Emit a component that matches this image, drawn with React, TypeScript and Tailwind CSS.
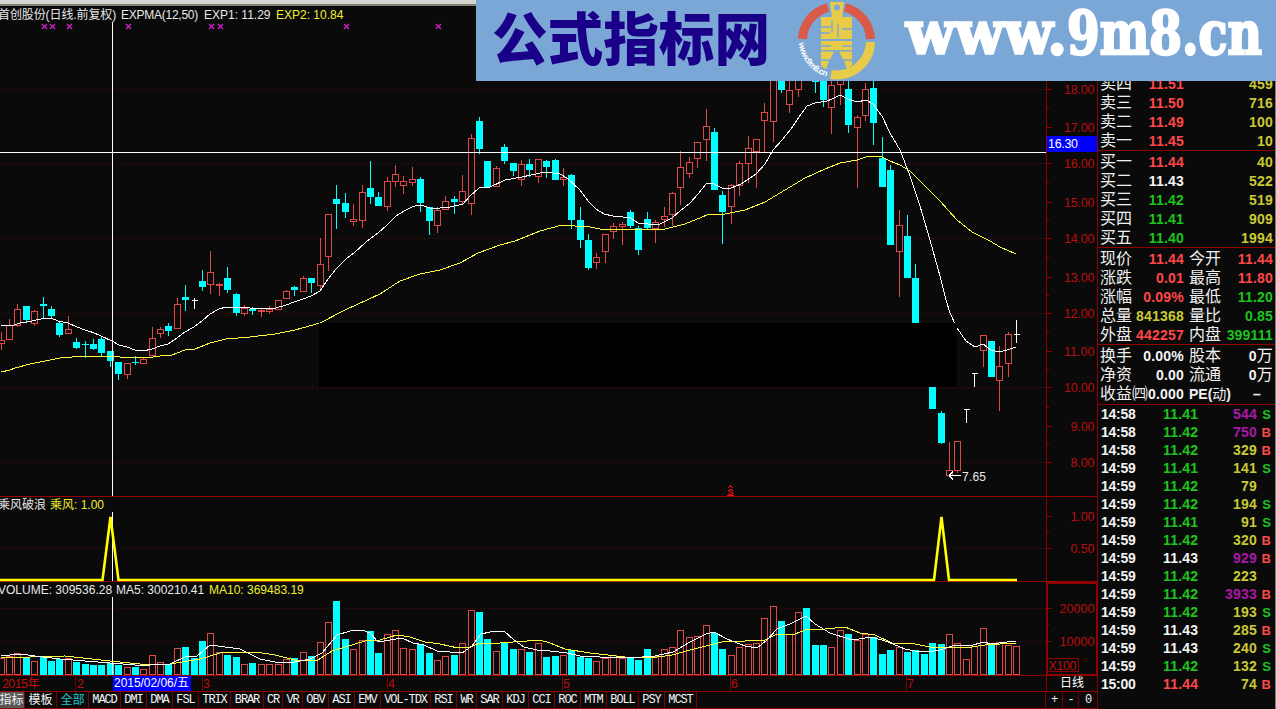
import clsx from 'clsx';

type Kind = 'r' | 'c' | 'x' | 't';
// kind, high, body top, body bottom, low, volume top
type Bar = [Kind, number, number, number, number, number];

const BARS: Bar[] = [
  ['r', 332, 340, 343, 349, 658], ['r', 319, 325, 339, 339, 656], ['r', 304, 309, 325, 326, 653], ['c', 306, 306, 320, 323, 657],
  ['r', 310, 311, 323, 325, 661], ['c', 297, 304, 306, 318, 656], ['c', 306, 309, 316, 319, 661], ['c', 321, 323, 335, 337, 659],
  ['r', 316, 329, 333, 333, 658], ['c', 338, 342, 348, 349, 662], ['c', 341, 344, 345, 358, 664], ['c', 339, 344, 349, 350, 665],
  ['c', 337, 339, 353, 356, 665], ['c', 351, 351, 361, 367, 663], ['c', 362, 362, 374, 380, 665], ['r', 363, 363, 374, 378, 667],
  ['c', 356, 362, 363, 365, 667], ['r', 357, 359, 363, 363, 669], ['r', 327, 338, 355, 355, 655], ['r', 327, 329, 333, 337, 662],
  ['c', 323, 326, 331, 336, 664], ['r', 298, 304, 328, 328, 648], ['c', 285, 297, 300, 311, 647], ['x', 298, 300, 300, 309, 658],
  ['c', 270, 281, 287, 291, 641], ['r', 251, 272, 284, 293, 633], ['r', 283, 284, 285, 295, 652], ['c', 267, 278, 290, 293, 655],
  ['c', 293, 294, 313, 316, 657], ['r', 305, 308, 313, 315, 664], ['c', 307, 309, 311, 315, 663], ['r', 309, 310, 311, 316, 664],
  ['r', 306, 309, 311, 313, 664], ['r', 300, 300, 309, 309, 664], ['r', 290, 291, 298, 298, 659], ['c', 286, 287, 290, 296, 658],
  ['r', 276, 278, 291, 291, 652], ['c', 278, 278, 283, 293, 656], ['r', 238, 264, 285, 288, 642], ['r', 214, 214, 256, 270, 622],
  ['c', 185, 199, 204, 229, 601], ['c', 193, 203, 212, 218, 639], ['r', 204, 219, 221, 225, 649], ['r', 185, 192, 220, 227, 640],
  ['c', 161, 188, 197, 204, 631], ['c', 192, 197, 206, 206, 653], ['r', 177, 181, 206, 210, 634], ['r', 165, 174, 181, 186, 630],
  ['r', 176, 181, 185, 193, 648], ['r', 167, 179, 182, 185, 649], ['c', 177, 179, 203, 212, 644], ['c', 207, 207, 221, 235, 653],
  ['r', 207, 210, 225, 232, 660], ['r', 196, 201, 209, 209, 656], ['c', 196, 199, 202, 214, 655], ['r', 175, 191, 201, 204, 643],
  ['r', 134, 138, 203, 214, 610], ['c', 117, 121, 149, 154, 612], ['c', 161, 161, 187, 187, 639], ['r', 166, 168, 186, 186, 651],
  ['c', 144, 147, 161, 164, 643], ['c', 163, 163, 171, 176, 649], ['r', 160, 164, 179, 185, 649], ['c', 159, 164, 170, 177, 652],
  ['r', 159, 159, 176, 182, 643], ['c', 160, 161, 167, 178, 657], ['c', 159, 160, 180, 180, 656], ['r', 168, 177, 179, 185, 655],
  ['c', 174, 175, 220, 229, 650], ['c', 207, 220, 240, 248, 657], ['c', 234, 240, 268, 270, 658], ['r', 253, 257, 262, 268, 661],
  ['r', 234, 234, 251, 262, 658], ['r', 223, 226, 231, 238, 655], ['r', 222, 224, 226, 244, 658], ['c', 210, 212, 226, 228, 658],
  ['c', 226, 228, 250, 255, 660], ['c', 212, 219, 228, 230, 649], ['r', 220, 222, 228, 242, 656], ['r', 207, 216, 219, 226, 649],
  ['r', 192, 193, 214, 225, 647], ['r', 151, 167, 187, 204, 630], ['r', 157, 162, 173, 177, 637], ['r', 142, 142, 158, 167, 636],
  ['r', 109, 126, 139, 160, 625], ['c', 128, 132, 190, 190, 633], ['c', 191, 195, 212, 244, 649], ['r', 184, 185, 206, 223, 655],
  ['r', 161, 163, 185, 195, 647], ['r', 136, 148, 163, 182, 644], ['r', 139, 139, 151, 187, 643], ['r', 103, 112, 120, 152, 618],
  ['r', 60, 70, 121, 141, 606], ['c', 60, 60, 90, 93, 621], ['r', 60, 90, 104, 112, 634], ['r', 60, 62, 89, 96, 612],
  ['c', 50, 50, 60, 70, 608], ['c', 60, 60, 82, 93, 645], ['c', 60, 60, 100, 107, 645], ['r', 75, 85, 107, 133, 647],
  ['r', 60, 70, 84, 104, 630], ['c', 78, 89, 125, 133, 634], ['r', 115, 117, 127, 187, 640], ['r', 83, 89, 115, 120, 634],
  ['c', 73, 88, 123, 145, 637], ['c', 137, 158, 187, 187, 654], ['c', 165, 170, 245, 245, 650], ['r', 210, 225, 251, 296, 647],
  ['c', 215, 236, 278, 278, 652], ['c', 264, 278, 323, 323, 650], ['c', 330, 332, 370, 372, 654], ['c', 386, 386, 409, 409, 643],
  ['c', 411, 413, 443, 444, 644], ['r', 442, 470, 475, 475, 634], ['r', 441, 441, 470, 472, 643], ['t', 409, 409, 409, 423, 659],
  ['t', 373, 373, 373, 387, 646], ['r', 335, 335, 350, 366, 628], ['c', 341, 341, 377, 377, 644], ['r', 346, 366, 380, 410, 642],
  ['r', 332, 334, 363, 376, 645], ['x', 320, 334, 334, 343, 646],
];

const barX = (i: number) => Math.floor(1.15 + 8.392 * i);

const EXP1 =
  '1,325 14,325 20,323 30,321.5 36,320 43,318.5 52,318.5 58,321 68,323 77,327 85,330 93,332.5 101,336 112,341 119,345 127,347 135,350 143,351 152,349 160,346 168,344 177,338 185,332 194,327 202,321 210,314 219,309 226,307 235,307 250,308 276,308 286,305 294,302 303,299 311,296 320,291 328,279 336,269 346,259 354,253 366,242 378,233 386,226 396,216 404,211 412,207 418,205 424,206 430,208 440,208 450,207 463,204 470,196 479,188 490,187 505,180 522,177 545,172 560,174 567,178 580,190 588,201 596,209 604,214 615,216.5 630,217.5 638,223 648,224 660,224 672,218 680,211 690,203 698,194 706,184 712,183 722,188 731,188 741,184 756,174 765,164 773,150 782,140 791,129 799,117 807,106 815,103 827,101 832,99 840,95 848,99 857,102 866,100 873,104 882,116 890,133 900,150 910,176 920,206 930,240 940,276 946,300 950,313 957,328 966,341 975,347 983,344 991,350 999,352 1007,350 1016,347';
const EXP2 =
  '1,372 10,370 15,368 30,364 45,361 60,358 72,357 90,356.5 150,357.5 160,356 172,355 185,350 195,349 210,343 226,339 250,337 275,334 295,330 320,323 345,310 380,294 400,281 420,274 440,270 460,263 478,253 500,245 515,241 540,231 562,225 575,226 590,227 600,229 665,229 685,224 707,215 725,214 745,210 765,202 785,190 805,178 825,169 840,163 857,160 866,157 873,156 882,157 890,161 900,165 910,171 925,186 940,201 957,220 972,232 990,241 1000,247 1016,254';
const VMA5 =
  '1,656 20,654 35,656 60,659 85,661 110,663 135,665 150,665 170,664 185,657 197,656 210,645 225,647 240,649 260,659 275,662 290,663 310,659 322,653 337,635 350,631 362,630 370,633 378,642 390,640 402,638 413,643 424,645 437,651 462,653 472,646 481,634 490,632 504,631 514,640 524,647 537,650 550,651 567,653 580,656 600,657 630,658 655,656 673,652 690,642 706,634 714,632 727,639 745,646 757,648 767,640 777,629 790,624 806,616 815,624 830,633 852,640 872,637 888,642 905,649 915,651 928,652 940,650 955,645 970,646 983,642 992,644 1007,642 1016,641';
const VMA10 =
  '1,657 30,657 65,656 110,661 140,664 170,664 200,659 220,653 245,652 262,653 275,655 295,660 318,660 332,651 345,647 365,641 380,640 397,635 410,637 425,642 440,644 458,648 470,647 480,643 500,643 540,640 550,643 565,649 590,653 625,657 650,658 672,655 690,650 710,645 722,642 745,641 765,640 775,635 795,634 808,629 825,629 845,627 860,633 875,635 892,643 915,644 930,647 965,648 985,645 1016,643';

const PRICE_AXIS: [string, number][] = [
  ['18.00', 89], ['17.00', 127], ['16.00', 163], ['15.00', 202], ['14.00', 238], ['13.00', 277],
  ['12.00', 313], ['11.00', 351], ['10.00', 387], ['9.00', 426], ['8.00', 462],
];
const OTHER_AXIS: [string, number][] = [
  ['1.00', 516], ['0.50', 548], ['20000', 608], ['10000', 641],
];

const COLORS: Record<string, string> = {
  r: 'text-[#ff4848]',
  g: 'text-[#1cc41c]',
  w: 'text-[#f4f4f4]',
  y: 'text-[#c9c934]',
  p: 'text-[#a818a8]',
};

const ORDERS_SELL = [
  ['卖四', '11.51', 'r', '459'],
  ['卖三', '11.50', 'r', '716'],
  ['卖二', '11.49', 'r', '100'],
  ['卖一', '11.45', 'r', '10'],
];
const ORDERS_BUY = [
  ['买一', '11.44', 'r', '40'],
  ['买二', '11.43', 'w', '522'],
  ['买三', '11.42', 'g', '519'],
  ['买四', '11.41', 'g', '909'],
  ['买五', '11.40', 'g', '1994'],
];
const QUOTES = [
  ['现价', '11.44', 'r', '今开', '11.44', 'r'],
  ['涨跌', '0.01', 'r', '最高', '11.80', 'r'],
  ['涨幅', '0.09%', 'r', '最低', '11.20', 'g'],
  ['总量', '841368', 'y', '量比', '0.85', 'g'],
  ['外盘', '442257', 'r', '内盘', '399111', 'g'],
];
const FUNDAMENTALS = [
  ['换手', '0.00%', 'w', '股本', '0万', 'w'],
  ['净资', '0.00', 'w', '流通', '0万', 'w'],
  ['收益㈣', '0.000', 'w', 'PE(动)', '–', 'w'],
];
const TRADES = [
  ['14:58', '11.41', 'g', '544', 'p', 'S'],
  ['14:58', '11.42', 'g', '750', 'p', 'B'],
  ['14:58', '11.42', 'g', '329', 'y', 'B'],
  ['14:59', '11.41', 'g', '141', 'y', 'S'],
  ['14:59', '11.42', 'g', '79', 'y', ''],
  ['14:59', '11.42', 'g', '194', 'y', 'S'],
  ['14:59', '11.41', 'g', '91', 'y', 'S'],
  ['14:59', '11.42', 'g', '320', 'y', 'B'],
  ['14:59', '11.43', 'w', '929', 'p', 'B'],
  ['14:59', '11.42', 'g', '223', 'y', ''],
  ['14:59', '11.42', 'g', '3933', 'p', 'B'],
  ['14:59', '11.42', 'g', '193', 'y', 'S'],
  ['14:59', '11.43', 'w', '285', 'y', 'B'],
  ['14:59', '11.43', 'w', '240', 'y', 'S'],
  ['14:59', '11.42', 'g', '132', 'y', 'S'],
  ['15:00', '11.44', 'r', '74', 'y', 'B'],
];

const TABS: [string, string][] = [
  ['MACD', 'w-[32px]'], ['DMI', 'w-[26px]'], ['DMA', 'w-[26px]'], ['FSL', 'w-[26px]'], ['TRIX', 'w-[32px]'],
  ['BRAR', 'w-[33px]'], ['CR', 'w-[19px]'], ['VR', 'w-[20px]'], ['OBV', 'w-[26px]'], ['ASI', 'w-[26px]'],
  ['EMV', 'w-[26px]'], ['VOL-TDX', 'w-[50px]'], ['RSI', 'w-[26px]'], ['WR', 'w-[20px]'], ['SAR', 'w-[26px]'],
  ['KDJ', 'w-[26px]'], ['CCI', 'w-[26px]'], ['ROC', 'w-[26px]'], ['MTM', 'w-[26px]'], ['BOLL', 'w-[32px]'],
  ['PSY', 'w-[26px]'], ['MCST', 'w-[32px]'],
];

function Candles() {
  return (
    <g>
      {BARS.map(([kind, high, top, bottom, low], i) => {
        const x = barX(i);
        if (kind === 'c') {
          return (
            <g key={i} fill="#00ffff">
              <rect x={x} y={high} width={1} height={low - high} />
              <rect x={x - 3} y={top} width={7} height={bottom - top} />
            </g>
          );
        }
        if (kind === 'r') {
          return (
            <g key={i} fill="none" stroke="#e04848">
              <path d={`M${x + 0.5} ${high}V${top}M${x + 0.5} ${bottom + 1}V${low + 1}`} />
              <rect x={x - 2.5} y={top + 0.5} width={6} height={bottom - top} />
            </g>
          );
        }
        return <path key={i} d={`M${x + 0.5} ${high}V${low}M${x - 2} ${top + 0.5}h6`} stroke="#fff" />;
      })}
    </g>
  );
}

function GridLine({ y }: { y: number }) {
  return <path d={`M0 ${y + 0.5}H1046`} stroke="#380c0c" strokeDasharray="2 2" />;
}

function PriceChart() {
  return (
    <svg className="block h-[474px] w-[1046px]" viewBox="0 22 1046 474" shapeRendering="crispEdges">
      {[89, 163, 238, 313, 387, 462].map((y) => <GridLine key={y} y={y} />)}
      <Candles />
      <g fill="none">
        <polyline points={EXP2} stroke="#ffff40" />
        <polyline points={EXP1} stroke="#fff" />
      </g>
      <rect x={319} y={323} width={638} height={64} fill="#000" />
      {[44, 52, 69, 128, 211, 220, 346, 438].map((x) => (
        <path key={x} d={`M${x - 2} 24l5 5m0 -5l-5 5`} stroke="#d020d0" strokeWidth={1.3} shapeRendering="auto" />
      ))}
      <path d="M112.5 22V496M0 152.5H1046" stroke="#fff" />
      <path d="M949 475.5h12M949 475.5l4 -4M949 475.5l4 4" stroke="#fff" fill="none" />
      <text x={962} y={481} fill="#e8e8e8" fontSize={12} textLength={24}>7.65</text>
      <path d="M728 488l2.500 -2l2.500 2" stroke="#f01010" fill="none" />
      <text x={727.500} y={495} fill="#f01010" fontSize={9} fontWeight="bold">S</text>
      <path d="M727 495.500h7" stroke="#f01010" />
    </svg>
  );
}

function SignalChart() {
  return (
    <svg className="block h-[70px] w-[1046px]" viewBox="0 512 1046 70" shapeRendering="crispEdges">
      <GridLine y={548} />
      <path d="M0 581.500H1046" stroke="#900000" />
      <path d="M112.500 512V581" stroke="#fff" />
      <path d="M0 580H102.500L110.500 517L118.500 580H934L941.500 517L949 580H1017" fill="none" stroke="#ff0" strokeWidth={2.6} shapeRendering="auto" />
    </svg>
  );
}

function VolumeChart() {
  return (
    <svg className="block h-[79px] w-[1046px]" viewBox="0 597 1046 79" shapeRendering="crispEdges">
      <GridLine y={608} />
      <GridLine y={641} />
      {BARS.map(([kind, , , , , top], i) => {
        const x = barX(i);
        const filled = kind === 'c' || i === 23;
        return filled
          ? <rect key={i} x={x - 3} y={top} width={7} height={675 - top} fill="#00ffff" />
          : <rect key={i} x={x - 2.5} y={top + 0.5} width={6} height={674 - top} fill="none" stroke="#e04848" />;
      })}
      <g fill="none">
        <polyline points={VMA10} stroke="#ffff40" />
        <polyline points={VMA5} stroke="#fff" />
      </g>
      <path d="M112.500 597V675" stroke="#fff" />
      <path d="M0 675.500H1046" stroke="#900000" />
    </svg>
  );
}

function AxisColumn() {
  return (
    <svg className="block h-[670px] w-[52px]" viewBox="1046 6 52 670" shapeRendering="crispEdges">
      <path d="M1046.500 6V676M1097.500 6V676M1046 496.500H1098M1046 581.500H1098" stroke="#900000" />
      {[...PRICE_AXIS, ...OTHER_AXIS].map(([label, y]) => (
        <g key={label}>
          <path d={`M1047 ${y + 0.5}h5`} stroke="#900000" />
          <text x={1094.500} y={y + 5} fill="#bc0c0c" fontSize={12.500} textAnchor="end" textLength={label.length === 4 ? 24 : label[2] === '.' ? 30.5 : 35}>
            {label}
          </text>
        </g>
      ))}
      {[108, 145, 182, 220, 257, 295, 332, 369, 407, 444, 532, 624].map((y) => (
        <path key={y} d={`M1047 ${y + 0.5}h2`} stroke="#900000" />
      ))}
      <rect x={1047} y={583} width={50} height={92} fill="none" stroke="#900000" strokeWidth={2} />
      <rect x={1047.500} y={658.500} width={31} height={13} fill="none" stroke="#900000" />
      <text x={1048.500} y={670} fill="#bc0c0c" fontSize={12.500} textLength={28}>X100</text>
      <rect x={1047} y={136} width={50} height={16} fill="#0000ff" />
      <text x={1048} y={148} fill="#fff" fontSize={12.500} textLength={30}>16.30</text>
    </svg>
  );
}

function DateRow() {
  return (
    <div className="flex h-[16px] border-b border-[#900000]">
      <svg className="block h-[15px] w-[1046px]" viewBox="0 676 1046 15">
        <path d="M75.500 676v15M202.500 676v15M387.500 676v15M562.500 676v15M730.500 676v15M906.500 676v15" stroke="#700000" />
        <g fill="#bc0c0c" fontSize={12.500}>
          <text x={2} y={688} textLength={38}>2015年</text>
          <text x={77} y={688}>2</text>
          <text x={203} y={688}>3</text>
          <text x={388} y={688}>4</text>
          <text x={563} y={688}>5</text>
          <text x={731} y={688}>6</text>
          <text x={907} y={688}>7</text>
        </g>
        <rect x={113} y={676} width={78} height={15} fill="#0000ff" />
        <text x={114} y={687} fill="#fff" fontSize={12} textLength={75}>2015/02/06/五</text>
      </svg>
      <div className="w-[52px] border-x border-[#900000] text-center text-[12px] leading-[14px] text-white">日线</div>
    </div>
  );
}

function TabBar() {
  const cell = 'flex items-center justify-center border-r border-[#800000]';
  const mono = 'font-["Liberation_Mono"] text-[12px] tracking-[-1.1px]';
  return (
    <div className="flex h-[17px] border-b border-[#900000] text-[12px] text-[#f4f4f4]">
      <div className={clsx(cell, 'w-[25px] bg-[#585858]')}><span className="-ml-px whitespace-nowrap">指标</span></div>
      <div className={clsx(cell, 'w-[32px]')}>模板</div>
      <div className={clsx(cell, 'w-[32px] text-[#20c8c8]')}>全部</div>
      {TABS.map(([name, width]) => (
        <div key={name} className={clsx(cell, width, mono)}>{name}</div>
      ))}
      <div className="flex-1" />
      <div className={clsx(cell, mono, 'w-[18px] border-l')}>+</div>
      <div className={clsx(cell, mono, 'w-[16px]')}>-</div>
      <div className={clsx(cell, mono, 'w-[19px]')}>0</div>
    </div>
  );
}

const NUM = 'font-bold text-[14px]';
const LABEL = 'text-[#f0f0f0] whitespace-nowrap';

function OrderRows({ rows }: { rows: string[][] }) {
  return (
    <>
      {rows.map(([label, price, color, vol]) => (
        <div key={label} className="flex h-[19px] items-center">
          <span className={clsx(LABEL, 'w-[32px] text-[16px]')}>{label}</span>
          <span className={clsx(NUM, COLORS[color], 'w-[52px] text-right tracking-[0.2px]')}>{price}</span>
          <span className={clsx(NUM, COLORS.y, 'flex-1 text-right tracking-[0.2px]')}>{vol}</span>
        </div>
      ))}
    </>
  );
}

function QuoteRows({ rows }: { rows: string[][] }) {
  return (
    <>
      {rows.map(([a, av, ac, b, bv, bc]) => (
        <div key={a} className="flex h-[19px] items-center">
          <span className={clsx(LABEL, 'w-[32px] text-[16px]')}>{a}</span>
          <span className={clsx(NUM, COLORS[ac], 'flex w-[52px] justify-end tracking-[0.2px]')}>{av}</span>
          <span className={clsx(LABEL, 'ml-[5px] w-[32px]', b.startsWith('PE') ? 'text-[14px]' : 'text-[16px]')}>
            {b.startsWith('PE') ? <><b>PE(</b>动<b>)</b></> : b}
          </span>
          <span className={clsx(NUM, COLORS[bc], 'flex flex-1 items-center justify-end tracking-[0.2px]', bv === '–' && 'pr-3')}>
            {bv.replace('万', '')}
            {bv.endsWith('万') && <span className="text-[16px] font-normal">万</span>}
          </span>
        </div>
      ))}
    </>
  );
}

function QuotePanel() {
  return (
    <aside className="flex w-[178px] flex-col border-r border-[#808080] leading-none">
      <div className="flex h-[145px] flex-col justify-end border-b border-[#900000] px-[2px]">
        <OrderRows rows={ORDERS_SELL} />
      </div>
      <div className="border-b border-[#900000] px-[2px] pt-px">
        <OrderRows rows={ORDERS_BUY} />
      </div>
      <div className="border-b border-[#900000] px-[2px] pt-px">
        <QuoteRows rows={QUOTES} />
      </div>
      <div className="border-b border-[#900000] px-[2px] py-px">
        <QuoteRows rows={FUNDAMENTALS} />
      </div>
      <div className="pl-[3px] pr-[4px]">
        {TRADES.map(([time, price, pc, vol, vc, side], i) => (
          <div key={i} className="flex h-[18px] items-center">
            <span className={clsx(NUM, COLORS.w, 'w-[62px] tracking-[-0.25px]')}>{time}</span>
            <span className={clsx(NUM, COLORS[pc], 'w-[36px] tracking-[0.2px]')}>{price}</span>
            <span className={clsx(NUM, COLORS[vc], 'flex-1 text-right tracking-[0.2px]')}>{vol}</span>
            <span className={clsx('w-[14px] text-right text-[13px] font-bold', side === 'S' ? COLORS.g : COLORS.r)}>{side}</span>
          </div>
        ))}
      </div>
    </aside>
  );
}

function Banner() {
  return (
    <div className="absolute left-[476px] top-0 h-[81px] w-[800px] bg-[#7ba7d6]">
      <svg className="block h-[81px] w-[800px]" viewBox="476 0 800 81">
        <text x={492} y={60} fill="#1a0088" fontSize={57} fontWeight={900} textLength={278} lengthAdjust="spacingAndGlyphs">公式指标网</text>
        <g fill="none" strokeWidth={9}>
          <path d="M802.500 39A34 34 0 0 1 828 7.500M845 7.500A34 34 0 0 1 870.500 39" stroke="#d95a48" />
          <path d="M870.500 42A34 34 0 0 1 831 74.500" stroke="#e8cc48" />
        </g>
        <g fill="#e8cc48">
          <path d="M830 2h14l-2 15h10v22H821V17h11z" />
          <path d="M821 41h31v9H821zM821 51.500h13l-4 8h-9zM839 51.500h13v8h-9zM821 61h8l-3 8q-3 -1 -5 -4zM844 61h8v4q-2 3 -5 4z" />
        </g>
        <circle cx={837} cy={7.500} r={3} fill="#7ba7d6" />
        <path d="M821 27h10M821 33h9M842 29h10M832 20v12M838 24v14M821 46h10M842 46h10" stroke="#7ba7d6" strokeWidth={1.3} />
        <path id="ring" d="M799 43A38 38 0 0 0 829 77" fill="none" />
        <text fill="#fff" fontSize={8.500} fontWeight="bold" textLength={46}>
          <textPath href="#ring" textLength={46}>www.9m8.cn</textPath>
        </text>
        <text y={54} fill="#fff" stroke="#fff" strokeWidth={2.5} fontFamily="DejaVu Serif" fontSize={59} fontWeight="bold">
          <tspan x={906} textLength={161} lengthAdjust="spacingAndGlyphs">www.</tspan>
          <tspan x={1067} textLength={115} lengthAdjust="spacingAndGlyphs">9m8</tspan>
          <tspan x={1182} textLength={80} lengthAdjust="spacingAndGlyphs">.cn</tspan>
        </text>
      </svg>
    </div>
  );
}

export default function App() {
  return (
    <div className="relative flex h-[709px] w-[1276px] flex-col overflow-hidden bg-[#0a0a0a] font-['Liberation_Sans','Noto_Sans_CJK_SC',sans-serif]">
      <div className="h-[6px] shrink-0 border-b-2 border-[#808070] bg-[#d4d4d0]" />
      <div className="flex">
        <main className="w-[1098px]">
          <div className="flex">
            <div className="w-[1046px] text-[12px] leading-[16px] text-[#e8e8e8]">
              <div className="border-b border-[#900000]">
                <div className="-ml-0.5 flex h-[16px] whitespace-nowrap pt-px">
                  <span className="w-[123px] tracking-[-0.1px]">首创股份(日线.前复权)</span>
                  <span className="w-[83px] tracking-[-0.25px]">EXPMA(12,50)</span>
                  <span className="w-[72px]">EXP1: 11.29</span>
                  <span className="text-[#f0f030]">EXP2: 10.84</span>
                </div>
                <PriceChart />
              </div>
              <div>
                <div className="-ml-0.5 flex h-[15px] whitespace-nowrap">
                  <span className="w-[52px]">乘风破浪</span>
                  <span className="text-[#f0f030]">乘风: 1.00</span>
                </div>
                <SignalChart />
              </div>
              <div>
                <div className="-ml-0.5 flex h-[15px] whitespace-nowrap">
                  <span className="w-[118px]">VOLUME: 309536.28</span>
                  <span className="w-[93px]">MA5: 300210.41</span>
                  <span className="text-[#f0f030]">MA10: 369483.19</span>
                </div>
                <VolumeChart />
              </div>
            </div>
            <AxisColumn />
          </div>
          <DateRow />
          <TabBar />
        </main>
        <QuotePanel />
      </div>
      <Banner />
    </div>
  );
}
